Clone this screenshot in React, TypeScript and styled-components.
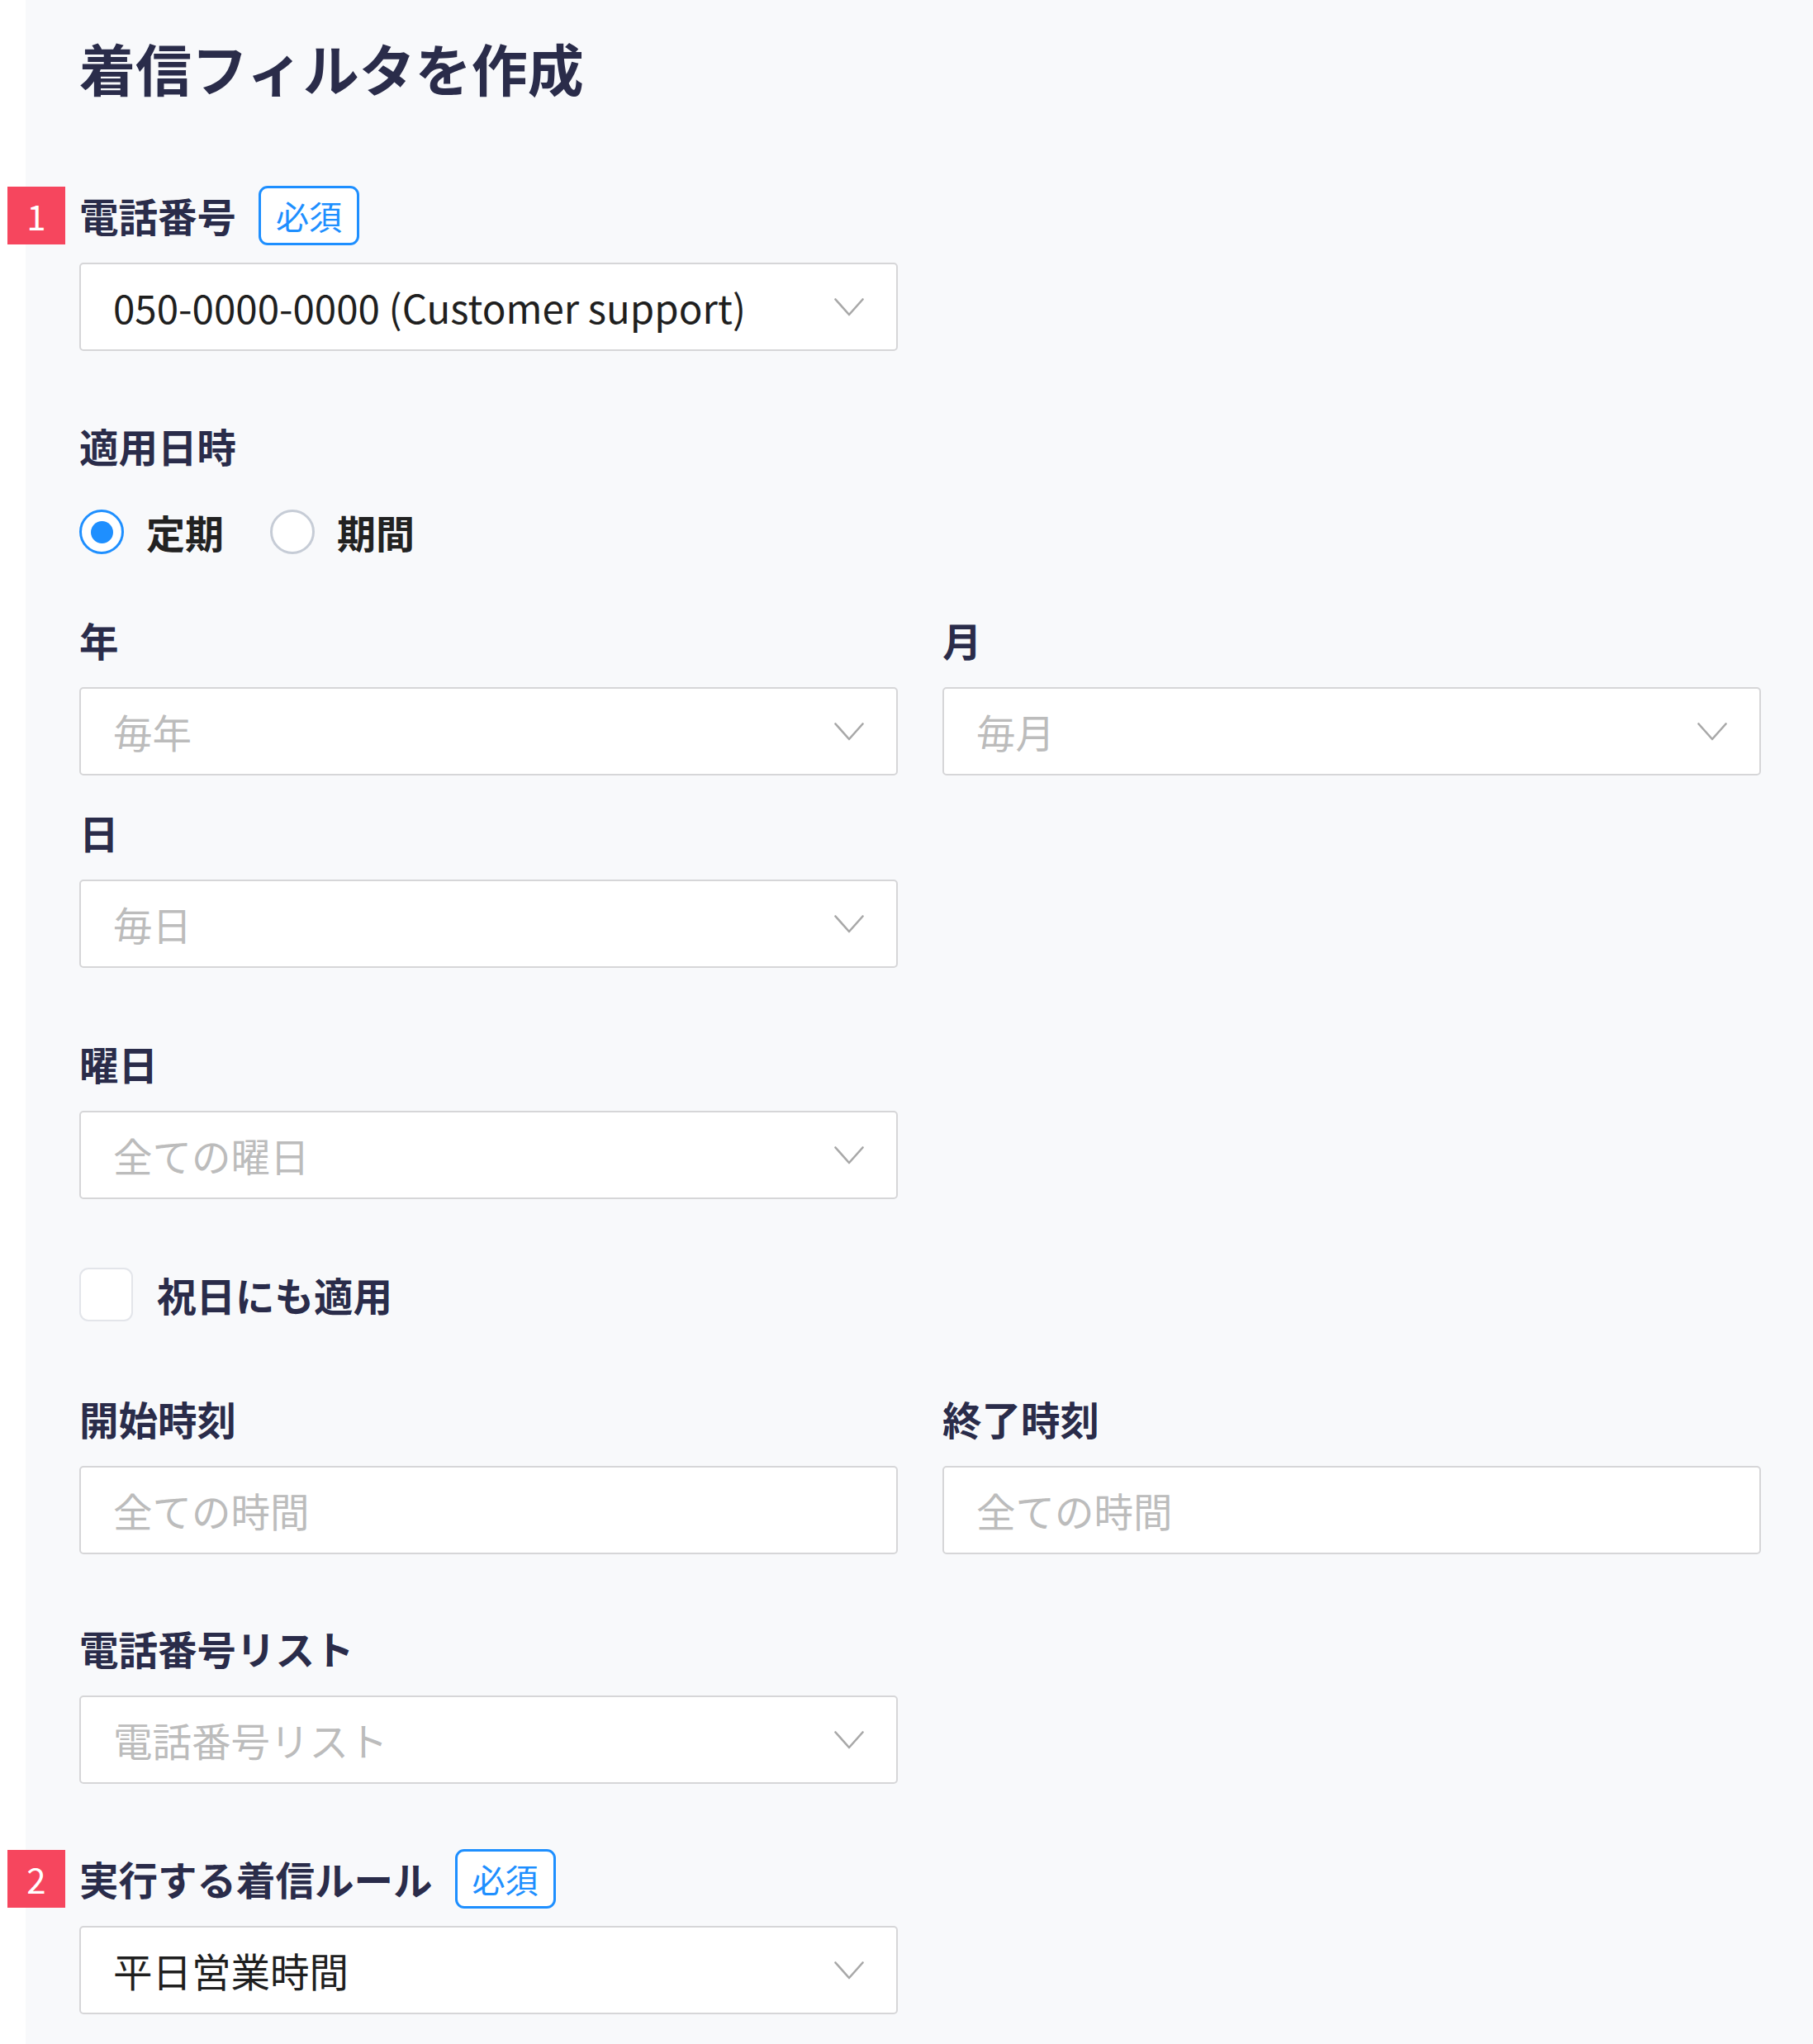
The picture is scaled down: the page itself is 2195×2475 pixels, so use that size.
import React from "react";
import styled, { createGlobalStyle } from "styled-components";

const GlobalStyle = createGlobalStyle`
  html, body {
    margin: 0;
    padding: 0;
    background: #ffffff;
  }
  body {
    font-family: "Noto Sans CJK JP", "Noto Sans", sans-serif;
  }
  * { box-sizing: border-box; }
`;

const Page = styled.div`
  display: flex;
  min-height: 2475px;
  background: #ffffff;
`;

const Strip = styled.div`
  width: 31px;
  flex-shrink: 0;
  background: #ffffff;
`;

const Panel = styled.main`
  flex: 1;
  background: #f8f9fb;
  padding: 35px 63px 40px 65px;
  display: flex;
  flex-direction: column;
`;

const Title = styled.h1`
  margin: 0;
  font-size: 68px;
  line-height: 94px;
  font-weight: 700;
  color: #2a2c4a;
  letter-spacing: 0;
`;

const Section = styled.section<{ $gap: number }>`
  margin-top: ${(p) => p.$gap}px;
  display: flex;
  flex-direction: column;
`;

const Grid = styled.div<{ $rowGap?: number }>`
  display: grid;
  grid-template-columns: 1fr 1fr;
  column-gap: 54px;
  row-gap: ${(p) => p.$rowGap ?? 0}px;
`;

const Half = styled.div`
  width: calc((100% - 54px) / 2);
  display: flex;
  flex-direction: column;
`;

const Cell = styled.div`
  display: flex;
  flex-direction: column;
`;

const LabelRow = styled.div`
  position: relative;
  display: flex;
  align-items: center;
  gap: 27px;
  height: 70px;
  margin-bottom: 22px;
`;

const Label = styled.span`
  font-size: 47.5px;
  line-height: 70px;
  font-weight: 700;
  color: #2a2c4a;
  white-space: nowrap;
`;

const StepBadge = styled.span`
  position: absolute;
  left: -87px;
  top: 0;
  width: 70px;
  height: 70px;
  background: #f6465e;
  color: #ffffff;
  font-size: 42px;
  line-height: 70px;
  text-align: center;
  font-weight: 400;
`;

const Required = styled.span`
  display: inline-flex;
  align-items: center;
  justify-content: center;
  width: 122px;
  height: 72px;
  border: 3px solid #1e8fff;
  border-radius: 11px;
  background: #ffffff;
  color: #1e8fff;
  font-size: 40px;
  font-weight: 400;
  line-height: 1;
`;

const Box = styled.div`
  height: 107px;
  background: #ffffff;
  border: 2px solid #d6d6d8;
  border-radius: 5px;
  display: flex;
  align-items: center;
  justify-content: space-between;
  padding: 0 39px 0 39px;
`;

const BoxText = styled.span<{ $placeholder?: boolean }>`
  font-size: 47.5px;
  line-height: 1;
  color: ${(p) => (p.$placeholder ? "#bcbcbc" : "#1f1f1f")};
  font-weight: 400;
  white-space: nowrap;
`;

const Chevron = styled.svg`
  width: 36px;
  height: 22px;
  flex-shrink: 0;
`;

const RadioRow = styled.div`
  display: flex;
  align-items: center;
  height: 54px;
  margin-top: 20px;
`;

const RadioItem = styled.label`
  display: flex;
  align-items: center;
  gap: 27px;
  margin-right: 56px;
`;

const RadioCircle = styled.span<{ $checked?: boolean }>`
  width: 54px;
  height: 54px;
  border-radius: 50%;
  background: #ffffff;
  border: 3px solid ${(p) => (p.$checked ? "#1e8fff" : "#c6ccd6")};
  display: flex;
  align-items: center;
  justify-content: center;
  &::after {
    content: "";
    display: ${(p) => (p.$checked ? "block" : "none")};
    width: 27px;
    height: 27px;
    border-radius: 50%;
    background: #1e8fff;
  }
`;

const OptionText = styled.span`
  font-size: 47px;
  line-height: 54px;
  font-weight: 700;
  color: #222222;
`;

const CheckRow = styled.label`
  display: flex;
  align-items: center;
  gap: 29px;
  height: 65px;
`;

const CheckBox = styled.span`
  width: 65px;
  height: 65px;
  border-radius: 11px;
  border: 2px solid #e3e5ea;
  background: #ffffff;
`;

const ChevronIcon = () => (
  <Chevron viewBox="0 0 36 22" fill="none">
    <path d="M1.5 1.5 L18 20 L34.5 1.5" stroke="#a8a8a8" strokeWidth="2.6" strokeLinecap="round" strokeLinejoin="round" />
  </Chevron>
);

const Select = ({ text, placeholder }: { text: string; placeholder?: boolean }) => (
  <Box>
    <BoxText $placeholder={placeholder}>{text}</BoxText>
    <ChevronIcon />
  </Box>
);

const Input = ({ text }: { text: string }) => (
  <Box>
    <BoxText $placeholder>{text}</BoxText>
  </Box>
);

const FieldLabel = ({ text, step, required }: { text: string; step?: number; required?: boolean }) => (
  <LabelRow>
    {step !== undefined && <StepBadge>{step}</StepBadge>}
    <Label>{text}</Label>
    {required && <Required>必須</Required>}
  </LabelRow>
);

export default function App() {
  return (
    <>
      <GlobalStyle />
      <Page>
        <Strip />
        <Panel>
          <Title>着信フィルタを作成</Title>

          <Section $gap={97}>
            <Half>
              <FieldLabel text="電話番号" step={1} required />
              <Select text="050-0000-0000 (Customer support)" />
            </Half>
          </Section>

          <Section $gap={80}>
            <FieldLabel text="適用日時" />
            <RadioRow>
              <RadioItem>
                <RadioCircle $checked />
                <OptionText>定期</OptionText>
              </RadioItem>
              <RadioItem>
                <RadioCircle />
                <OptionText>期間</OptionText>
              </RadioItem>
            </RadioRow>
          </Section>

          <Section $gap={69}>
            <Grid $rowGap={34}>
              <Cell>
                <FieldLabel text="年" />
                <Select text="毎年" placeholder />
              </Cell>
              <Cell>
                <FieldLabel text="月" />
                <Select text="毎月" placeholder />
              </Cell>
              <Cell>
                <FieldLabel text="日" />
                <Select text="毎日" placeholder />
              </Cell>
            </Grid>
          </Section>

          <Section $gap={81}>
            <Half>
              <FieldLabel text="曜日" />
              <Select text="全ての曜日" placeholder />
            </Half>
          </Section>

          <Section $gap={83}>
            <CheckRow>
              <CheckBox />
              <Label>祝日にも適用</Label>
            </CheckRow>
          </Section>

          <Section $gap={83}>
            <Grid>
              <Cell>
                <FieldLabel text="開始時刻" />
                <Input text="全ての時間" />
              </Cell>
              <Cell>
                <FieldLabel text="終了時刻" />
                <Input text="全ての時間" />
              </Cell>
            </Grid>
          </Section>

          <Section $gap={79}>
            <Half>
              <FieldLabel text="電話番号リスト" />
              <Select text="電話番号リスト" placeholder />
            </Half>
          </Section>

          <Section $gap={80}>
            <Half>
              <FieldLabel text="実行する着信ルール" step={2} required />
              <Select text="平日営業時間" />
            </Half>
          </Section>
        </Panel>
      </Page>
    </>
  );
}
